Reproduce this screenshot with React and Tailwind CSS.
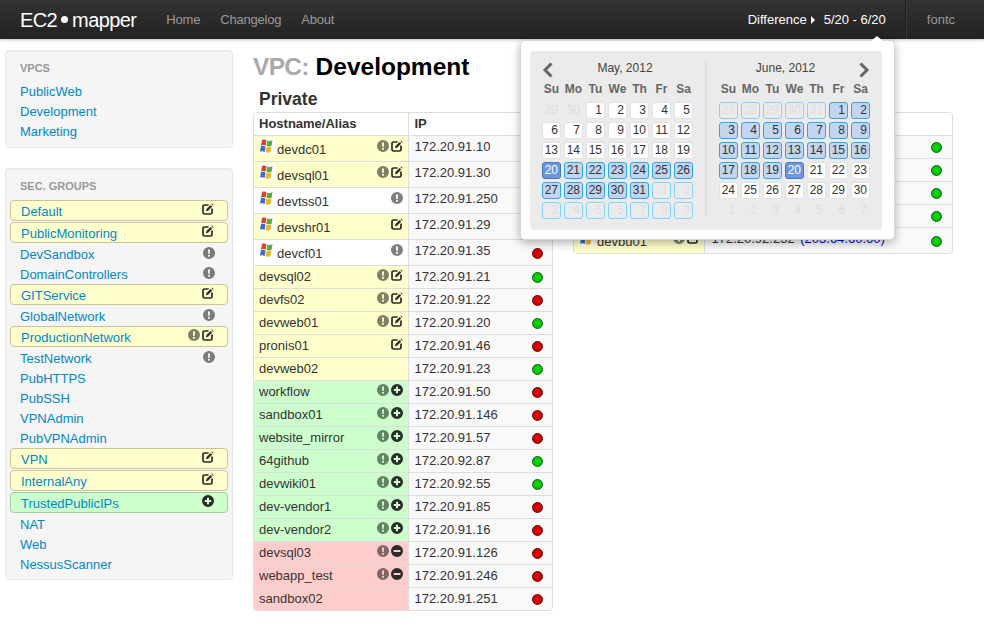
import React from 'react';

const vpcs = ['PublicWeb', 'Development', 'Marketing'];

const secGroups = [
  { name: 'Default', kind: 'yellow', icons: ['edit'] },
  { name: 'PublicMonitoring', kind: 'yellow', icons: ['edit'] },
  { name: 'DevSandbox', icons: ['alert'] },
  { name: 'DomainControllers', icons: ['alert'] },
  { name: 'GITService', kind: 'yellow', icons: ['edit'] },
  { name: 'GlobalNetwork', icons: ['alert'] },
  { name: 'ProductionNetwork', kind: 'yellow', icons: ['alert', 'edit'] },
  { name: 'TestNetwork', icons: ['alert'] },
  { name: 'PubHTTPS' },
  { name: 'PubSSH' },
  { name: 'VPNAdmin' },
  { name: 'PubVPNAdmin' },
  { name: 'VPN', kind: 'yellow', icons: ['edit'] },
  { name: 'InternalAny', kind: 'yellow', icons: ['edit'] },
  { name: 'TrustedPublicIPs', kind: 'green', icons: ['plus'] },
  { name: 'NAT' },
  { name: 'Web' },
  { name: 'NessusScanner' },
];

const privateHosts = [
  { name: 'devdc01', win: true, kind: 'yellow', icons: ['alert', 'edit'], ip: '172.20.91.10', up: false },
  { name: 'devsql01', win: true, kind: 'yellow', icons: ['alert', 'edit'], ip: '172.20.91.30', up: true },
  { name: 'devtss01', win: true, icons: ['alert'], ip: '172.20.91.250', up: false },
  { name: 'devshr01', win: true, kind: 'yellow', icons: ['edit'], ip: '172.20.91.29', up: true },
  { name: 'devcf01', win: true, icons: ['alert'], ip: '172.20.91.35', up: false },
  { name: 'devsql02', kind: 'yellow', icons: ['alert', 'edit'], ip: '172.20.91.21', up: true },
  { name: 'devfs02', kind: 'yellow', icons: ['alert', 'edit'], ip: '172.20.91.22', up: false },
  { name: 'devweb01', kind: 'yellow', icons: ['alert', 'edit'], ip: '172.20.91.20', up: true },
  { name: 'pronis01', kind: 'yellow', icons: ['edit'], ip: '172.20.91.46', up: false },
  { name: 'devweb02', kind: 'yellow', icons: [], ip: '172.20.91.23', up: true },
  { name: 'workflow', kind: 'green', icons: ['alert', 'plus'], ip: '172.20.91.50', up: false },
  { name: 'sandbox01', kind: 'green', icons: ['alert', 'plus'], ip: '172.20.91.146', up: false },
  { name: 'website_mirror', kind: 'green', icons: ['alert', 'plus'], ip: '172.20.91.57', up: false },
  { name: '64github', kind: 'green', icons: ['alert', 'plus'], ip: '172.20.92.87', up: true },
  { name: 'devwiki01', kind: 'green', icons: ['alert', 'plus'], ip: '172.20.92.55', up: true },
  { name: 'dev-vendor1', kind: 'green', icons: ['alert', 'plus'], ip: '172.20.91.85', up: false },
  { name: 'dev-vendor2', kind: 'green', icons: ['alert', 'plus'], ip: '172.20.91.16', up: false },
  { name: 'devsql03', kind: 'red', icons: ['alert', 'minus'], ip: '172.20.91.126', up: false },
  { name: 'webapp_test', kind: 'red', icons: ['alert', 'minus'], ip: '172.20.91.246', up: false },
  { name: 'sandbox02', kind: 'red', icons: [], ip: '172.20.91.251', up: false },
];

const rowBg = {
  yellow: 'bg-[#ffffcc]',
  green: 'bg-[#ccffcc]',
  red: 'bg-[#ffcccc]',
  white: 'bg-white',
};

const dayNames = ['Su', 'Mo', 'Tu', 'We', 'Th', 'Fr', 'Sa'];

const dayStyle = {
  off: 'border-transparent text-[#dddddd]',
  normal: 'border-[#e2e2e2] bg-white text-[#333333]',
  range: 'border-[#2aa8ee] bg-[#c3d5f1] text-[#333333]',
  selected: 'border-[#4a78b8] bg-[#6d96dd] text-white',
  offRange: 'border-[#7fd4ff] text-[#dddddd]',
};

const span = (from, to, kind) => {
  const days = [];
  for (let d = from; d <= to; d++) days.push({ d, kind });
  return days;
};

const mayDays = [
  ...span(29, 30, 'off'),
  ...span(1, 19, 'normal'),
  ...span(20, 20, 'selected'),
  ...span(21, 31, 'range'),
  ...span(1, 9, 'offRange'),
];

const juneDays = [
  ...span(27, 31, 'offRange'),
  ...span(1, 19, 'range'),
  ...span(20, 20, 'selected'),
  ...span(21, 30, 'normal'),
  ...span(1, 7, 'off'),
];

const AlertIcon = () => (
  <svg width="12" height="12" viewBox="0 0 12 12" className="shrink-0">
    <path
      fillRule="evenodd"
      fillOpacity="0.5"
      d="M6 0a6 6 0 1 0 0 12A6 6 0 0 0 6 0ZM4.9 2.4h2.2L6.7 7H5.3ZM6 7.7a1.1 1.1 0 1 1 0 2.2 1.1 1.1 0 0 1 0-2.2Z"
    />
  </svg>
);

const EditIcon = () => (
  <svg width="12" height="12" viewBox="0 0 12 12" fill="none" className="shrink-0">
    <path
      d="M6.6 2H2.6A1.6 1.6 0 0 0 1 3.6v5.8A1.6 1.6 0 0 0 2.6 11h5.8A1.6 1.6 0 0 0 10 9.4V5.6"
      stroke="#2b2b2b"
      strokeWidth="1.7"
    />
    <path d="M4 8.2 4.5 6 8.6 1.9 10.2 3.5 6.1 7.7Z" fill="#2b2b2b" />
    <path d="M9.4 1.1 10 .5 11.6 2.1 11 2.7Z" fill="#2b2b2b" />
  </svg>
);

const PlusIcon = () => (
  <svg width="12" height="12" viewBox="0 0 12 12" className="shrink-0">
    <path
      fillRule="evenodd"
      fill="#2b2b2b"
      d="M6 0a6 6 0 1 0 0 12A6 6 0 0 0 6 0ZM5 2.8h2V5h2.2v2H7v2.2H5V7H2.8V5H5Z"
    />
  </svg>
);

const MinusIcon = () => (
  <svg width="12" height="12" viewBox="0 0 12 12" className="shrink-0">
    <path
      fillRule="evenodd"
      fill="#2b2b2b"
      d="M6 0a6 6 0 1 0 0 12A6 6 0 0 0 6 0ZM2.6 5h6.8v2H2.6Z"
    />
  </svg>
);

const iconMap = { alert: AlertIcon, edit: EditIcon, plus: PlusIcon, minus: MinusIcon };

const IconSet = ({ icons = [], className = '' }) => (
  <div className={`ml-auto flex gap-[2px] ${className}`}>
    {icons.map((name) => {
      const Icon = iconMap[name];
      return <Icon key={name} />;
    })}
  </div>
);

const WindowsIcon = () => (
  <svg width="16" height="16" viewBox="0 0 16 16" className="shrink-0 bg-white">
    <path d="M3 2c1.500-.7 3-.6 4.500.1L6.600 7.600c-1.600-.7-3-.8-4.600-.1Z" fill="#d8432a" />
    <path d="M8.300 2.400c1.600.7 3.300.8 5.200-.2L12.600 7.800c-1.900.9-3.500.8-5.200 0Z" fill="#5fa83c" />
    <path d="M1.900 8.300c1.500-.7 3-.6 4.600.1L5.600 13.900c-1.600-.7-3-.8-4.600-.1Z" fill="#3a6ec4" />
    <path d="M7.300 8.700c1.600.7 3.300.8 5.200-.2L11.600 14c-1.900.9-3.500.8-5.200 0Z" fill="#f0b429" />
  </svg>
);

const StatusDot = ({ up }) => (
  <span
    className={`mx-auto mt-[2px] block h-[11px] w-[11px] rounded-full border ${
      up
        ? 'border-[#0a6a0a] bg-[radial-gradient(circle_at_50%_45%,#12dc12,#00b000)]'
        : 'border-[#6e0a0a] bg-[radial-gradient(circle_at_50%_45%,#dc0a0a,#b80000)]'
    }`}
  />
);

const Panel = ({ title, children, listClass }) => (
  <div className="rounded-[4px] border border-[#e8e8e8] bg-[#f5f5f5] pt-[7px] shadow-[inset_0_1px_1px_rgba(0,0,0,0.04)]">
    <div className="h-[20px] pl-[14px] text-[11px] leading-[20px] font-bold text-[#999999] uppercase">{title}</div>
    <div className={listClass}>{children}</div>
  </div>
);

const SecGroupRow = ({ group }) => {
  if (!group.kind) {
    return (
      <div className="flex h-[20px] items-center pr-[17px] pl-[14px] text-[13px] text-[#0088cc]">
        <span className="pt-[4px]">{group.name}</span>
        {group.icons && <IconSet icons={group.icons} className="-mt-[1px]" />}
      </div>
    );
  }
  const boxStyle = group.kind === 'yellow' ? 'border-[#cfc39a] bg-[#ffffcc]' : 'border-[#9fd09f] bg-[#ccffcc]';
  return (
    <div className={`mx-[4px] mt-[1px] flex h-[21px] items-center rounded-[4px] border pr-[13px] pl-[10px] text-[13px] text-[#0088cc] ${boxStyle}`}>
      <span className="pt-[2px]">{group.name}</span>
      <IconSet icons={group.icons} className="-mt-[3px]" />
    </div>
  );
};

const Calendar = ({ title, days, side }) => (
  <div className="w-[151px]">
    <div className="flex h-[19px] items-center">
      {side === 'prev' && (
        <svg width="15" height="16" viewBox="0 0 15 16" fill="none" className="shrink-0">
          <path d="M9.500 1.500 3 8 9.500 14.500" stroke="#666666" strokeWidth="3" />
        </svg>
      )}
      <div className="flex-1 pb-[3px] text-center text-[12px] text-[#444444]">{title}</div>
      {side === 'next' && (
        <svg width="18" height="16" viewBox="0 0 18 16" fill="none" className="shrink-0">
          <path d="M8.500 1.500 15 8 8.500 14.500" stroke="#666666" strokeWidth="3" />
        </svg>
      )}
    </div>
    <div className="grid h-[20px] grid-cols-[repeat(7,19px)] gap-x-[3px]">
      {dayNames.map((n) => (
        <div key={n} className="text-center text-[12px] leading-[20px] font-bold text-[#666666]">{n}</div>
      ))}
    </div>
    <div className="mt-[3px] grid grid-cols-[repeat(7,19px)] grid-rows-[repeat(6,17px)] gap-[3px]">
      {days.map((day, i) => (
        <div
          key={i}
          className={`rounded-[3px] border pr-[2px] text-right text-[12px] leading-[15px] ${dayStyle[day.kind]}`}
        >
          {day.d}
        </div>
      ))}
    </div>
  </div>
);

const DatePopup = () => (
  <div className="absolute top-[40px] left-[520px] z-10 h-[200px] w-[375px] rounded-[5px] border border-[#d8d8d8] bg-white pt-[10px] pl-[9px] shadow-[0_3px_10px_rgba(0,0,0,0.3)]">
    <div className="absolute -top-[5px] left-[350px] h-0 w-0 border-x-[6px] border-b-[5px] border-x-transparent border-b-white" />
    <div className="flex h-[179px] w-[352px] rounded-[4px] bg-[#ebebeb] pt-[9px] pl-[12px]">
      <Calendar title="May, 2012" days={mayDays} side="prev" />
      <div className="mx-[12px] mt-[1px] h-[155px] w-[2px] bg-[#dddddd]" />
      <Calendar title="June, 2012" days={juneDays} side="next" />
    </div>
  </div>
);

const HostTable = () => (
  <div className="w-[300px] overflow-hidden rounded-[4px] border border-[#dddddd]">
    <table className="w-full table-fixed border-collapse text-[13px] text-[#333333]">
      <colgroup>
        <col className="w-[154px]" />
        <col />
        <col className="w-[29px]" />
      </colgroup>
      <thead>
        <tr className="h-[22px] bg-white">
          <th className="border-r border-[#dddddd] pl-[5px] text-left font-bold">Hostname/Alias</th>
          <th colSpan={2} className="pl-[6px] text-left font-bold">IP</th>
        </tr>
      </thead>
      <tbody>
        {privateHosts.map((host) => (
          <tr key={host.name} className={host.win ? 'h-[26px]' : 'h-[23px]'}>
            <td className={`border-t border-r border-[#dddddd] p-0 align-top ${rowBg[host.kind || 'white']}`}>
              <div className="flex items-start pt-[2px] pr-[5px] pl-[5px] leading-[18px]">
                {host.win && <WindowsIcon />}
                <span className={host.win ? 'mt-[3px] ml-[2px]' : ''}>{host.name}</span>
                <IconSet icons={host.icons} className={host.win ? 'mt-[2px]' : 'mt-[1px]'} />
              </div>
            </td>
            <td className="border-t border-[#dddddd] bg-[#f9f9f9] p-0 pt-[2px] pl-[6px] align-top leading-[18px]">{host.ip}</td>
            <td className="border-t border-[#dddddd] bg-[#f9f9f9] p-0 align-middle">
              <StatusDot up={host.up} />
            </td>
          </tr>
        ))}
      </tbody>
    </table>
  </div>
);

const PublicTable = () => (
  <div className="w-[380px] overflow-hidden rounded-[4px] border border-[#dddddd]">
    <table className="w-full table-fixed border-collapse text-[13px] text-[#333333]">
      <colgroup>
        <col className="w-[130px]" />
        <col />
        <col className="w-[32px]" />
      </colgroup>
      <tbody>
        <tr className="h-[22px] bg-white">
          <td className="p-0" colSpan={3} />
        </tr>
        {[0, 1, 2, 3].map((i) => (
          <tr key={i} className="h-[23px]">
            <td className="border-t border-[#dddddd] bg-[#f9f9f9] p-0" colSpan={2} />
            <td className="border-t border-[#dddddd] bg-[#f9f9f9] p-0 align-middle">
              <StatusDot up />
            </td>
          </tr>
        ))}
        <tr className="h-[26px]">
          <td className="border-t border-r border-[#dddddd] bg-[#ffffcc] p-0 align-top">
            <div className="flex items-start pt-[2px] pr-[5px] pl-[5px] leading-[18px]">
              <WindowsIcon />
              <span className="mt-[3px] ml-[2px]">devbu01</span>
              <IconSet icons={['alert', 'edit']} className="mt-[2px]" />
            </div>
          </td>
          <td className="border-t border-[#dddddd] bg-[#f9f9f9] p-0 pt-[2px] pl-[7px] align-top leading-[18px] whitespace-nowrap">
            172.20.92.232 <span className="ml-[2px] text-[#0000dd]">(203.64.60.60)</span>
          </td>
          <td className="border-t border-[#dddddd] bg-[#f9f9f9] p-0 align-middle">
            <StatusDot up />
          </td>
        </tr>
      </tbody>
    </table>
  </div>
);

const App = () => (
  <div className="relative min-h-[639px] bg-white [font-family:'Liberation_Sans',Arial,sans-serif]">
    {/* Navbar */}
    <div className="flex h-[39px] items-center bg-gradient-to-b from-[#333333] to-[#222222] pr-[29px] pl-[20px] text-[13px] shadow-[0_1px_3px_rgba(0,0,0,0.25)]">
      <div className="flex items-center text-[20px] tracking-[-0.6px] text-white">
        <span>EC2</span>
        <span className="mx-[4px] h-[7px] w-[7px] rounded-full bg-white" />
        <span>mapper</span>
      </div>
      <div className="ml-[30px] flex gap-[20px] tracking-[-0.2px] text-[#999999]">
        <span>Home</span>
        <span>Changelog</span>
        <span>About</span>
      </div>
      <div className="ml-auto flex h-full items-center text-white">
        <span>Difference</span>
        <span className="mr-[9px] ml-[4px] h-0 w-0 border-y-[4px] border-l-[4px] border-y-transparent border-l-white" />
        <span>5/20 - 6/20</span>
        <div className="mr-[20px] ml-[19px] h-full border-r border-l border-r-[#383838] border-l-[#1e1e1e]" />
        <span className="text-[#999999]">fontc</span>
      </div>
    </div>

    <DatePopup />

    <div className="flex items-start pt-[11px] pl-[5px]">
      {/* Sidebar */}
      <div className="flex w-[228px] shrink-0 flex-col gap-[20px]">
        <Panel title="VPCs" listClass="mt-[4px] pb-[5px]">
          {vpcs.map((name) => (
            <div key={name} className="h-[20px] pl-[14px] text-[13px] leading-[20px] text-[#0088cc]">{name}</div>
          ))}
        </Panel>
        <Panel title="Sec. Groups" listClass="mt-[4px] pb-[6px]">
          {secGroups.map((group) => (
            <SecGroupRow key={group.name} group={group} />
          ))}
        </Panel>
      </div>

      {/* Main */}
      <div className="ml-[20px]">
        <h1 className="h-[34px] text-[24.5px] leading-[34px] font-bold text-black">
          <span className="tracking-[-0.7px] text-[#aaaaaa]">VPC:</span> Development
        </h1>
        <div className="flex items-start gap-[20px]">
          <div>
            <h2 className="h-[28px] pl-[6px] text-[17.5px] leading-[30px] font-bold text-[#333333]">Private</h2>
            <HostTable />
          </div>
          <div className="pt-[28px]">
            <PublicTable />
          </div>
        </div>
      </div>
    </div>
  </div>
);

export default App;
